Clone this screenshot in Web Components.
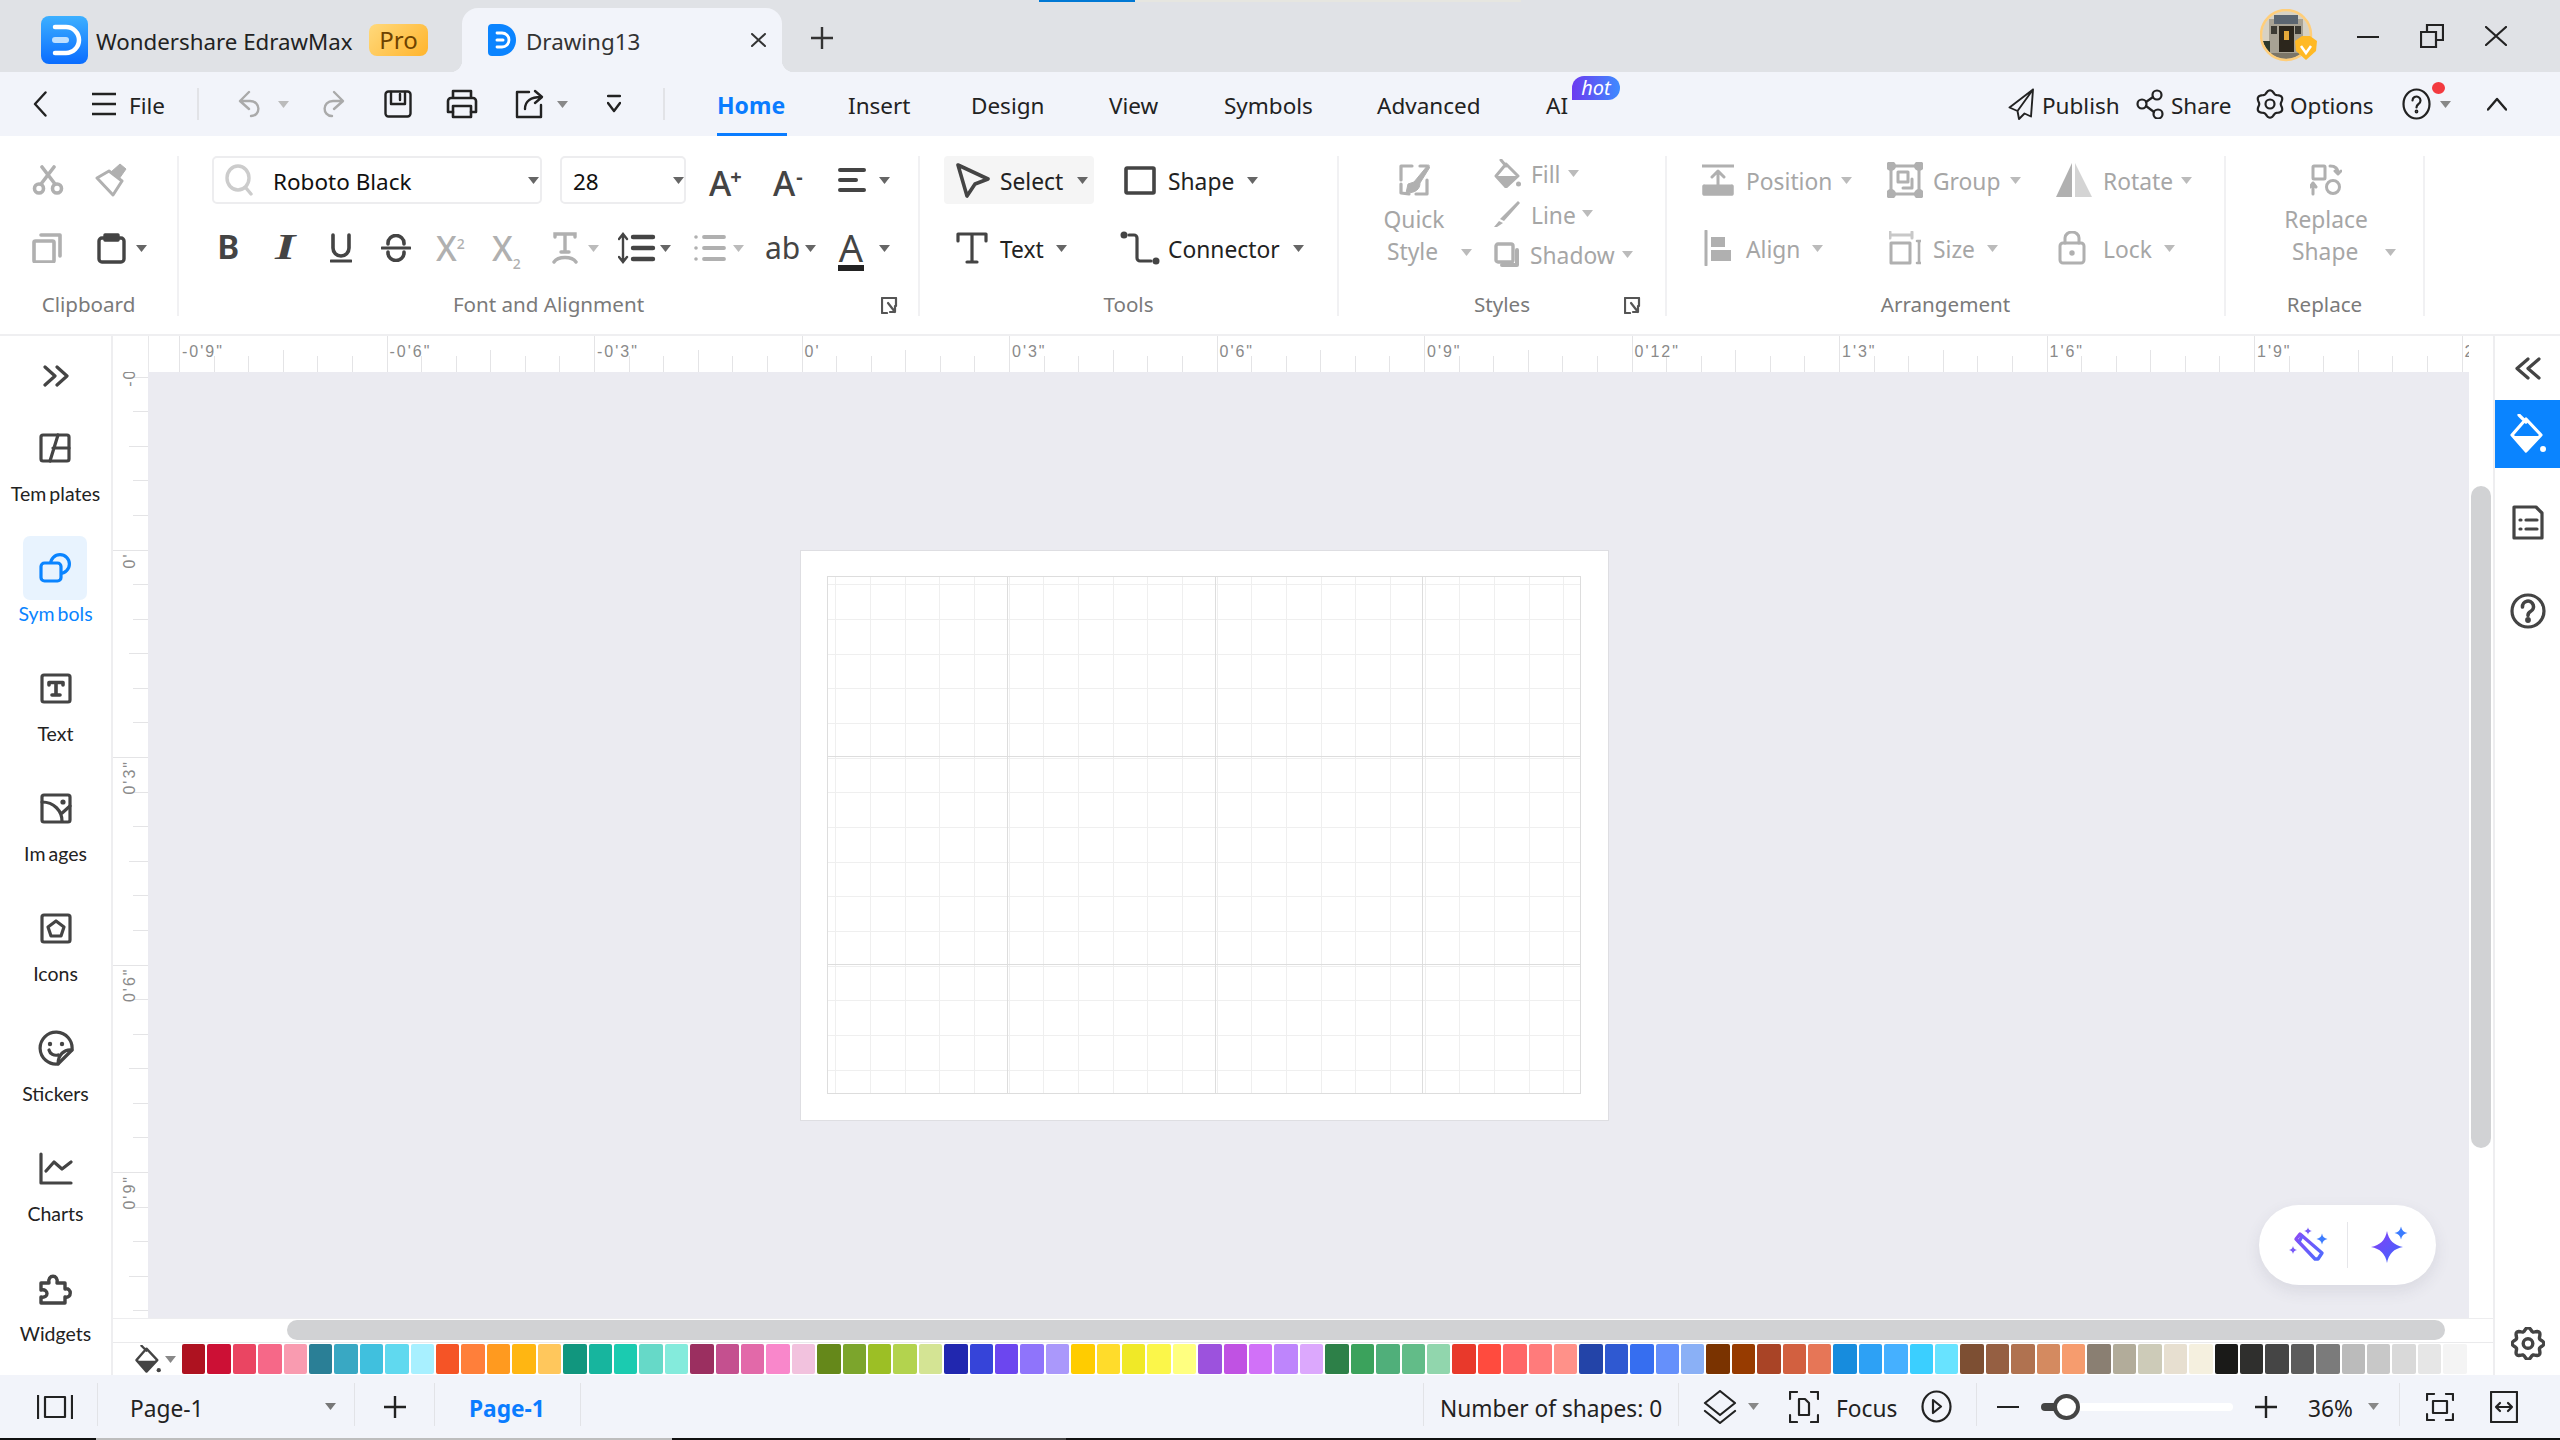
<!DOCTYPE html>
<html lang="en"><head><meta charset="utf-8"><title>EdrawMax</title>
<style>html,body{margin:0;padding:0;width:2560px;height:1440px;overflow:hidden;background:#fff;font-family:"Noto Sans",sans-serif}</style>
</head><body><app-shell></app-shell>
<script>
function gear(cx,cy,R,amp,n,rot){let d='';for(let i=0;i<96;i++){const t=i/96*Math.PI*2;const r=R*(1+amp*Math.cos(n*t+(rot||0)));d+=(i?'L':'M')+(cx+r*Math.sin(t)).toFixed(2)+' '+(cy-r*Math.cos(t)).toFixed(2)}return d+'Z'}
const star=(x,y,r)=>`M${x} ${y-r}Q${x+r*.15} ${y-r*.15} ${x+r} ${y}Q${x+r*.15} ${y+r*.15} ${x} ${y+r}Q${x-r*.15} ${y+r*.15} ${x-r} ${y}Q${x-r*.15} ${y-r*.15} ${x} ${y-r}Z`;
const ICONS={
back:[14,26,2.4,'<path d="M12.5 1.5 2 13l10.5 11.5"/>'],
ham:[24,24,2.4,'<path d="M0 2h24M0 12h24M0 22h24"/>'],
undo:[24,28,2.4,'<path d="M11 2 2 11l9 8M3 11h9c11 0 11 15 1 15"/>'],
redo:[24,28,2.4,'<path d="M13 2l9 9-9 8M21 11h-9C1 11 1 26 11 26"/>'],
save:[28,28,2.4,'<rect x="1.5" y="1.5" width="25" height="25" rx="3"/><path d="M7 2v12h14V2M16 4v6"/>'],
print:[32,30,2.6,'<path d="M7 9V2h18v7M7 23H2V12a3 3 0 0 1 3-3h22a3 3 0 0 1 3 3v11h-5"/><rect x="7" y="17" width="18" height="11"/>'],
exp:[31,30,2.4,'<path d="M14 3H2v25h24V16M10 20c0-8 6-12 16-12M20 2l7 6-7 6"/>'],
qa:[14,20,2.4,'<path d="M1 2h12M1 9l6 8 6-8"/>'],
pub:[27,32,1.9,'<path d="M25 1.500 1.500 19.500l8 3.500 1.500 8 5.500-5.500 6.500 3zM25 1.500 9.500 23"/>'],
share:[28,30,2.2,'<circle cx="6" cy="15" r="4.500"/><circle cx="21" cy="6" r="4.500"/><circle cx="22" cy="25" r="4.500"/><path d="m10 13 7-5M10 17l8 6"/>'],
gear:[28,30,2.2,`<path d="${gear(14,15,12.2,.12,6,0)}"/><circle cx="14" cy="15" r="4.500"/>`],
help:[29,32,2.2,'<ellipse cx="14.500" cy="16" rx="13" ry="14.500"/><path d="M10.500 12.500a4 4 0 1 1 6 3.500c-1.500 1-2 1.500-2 3.500"/><circle cx="14.500" cy="23.500" r=".8"/>'],
up:[20,14,2.4,'<path d="M1 12.500 10 2l9 10.500"/>'],
cut:[32,30,3.6,'<circle cx="7" cy="23.500" r="4.500"/><circle cx="25" cy="23.500" r="4.500"/><path d="M9 19 22 2M23 19 10 2"/>'],
brush:[34,34,3,'<path d="M3 15 15 8l13 10-9 14z"/><path fill="currentColor" stroke-width="1" d="M17 9 26 1l6 5-7 10z"/>'],
copy:[30,30,3.6,'<rect x="2" y="8" width="20" height="21" rx="1.500"/><path d="M9 2h19v21"/>'],
paste:[29,32,3.4,'<rect x="2" y="6" width="25" height="24" rx="3"/><path fill="currentColor" d="M8 8V3h13v5z"/>'],
search:[28,32,3.4,'<ellipse cx="13" cy="14" rx="11" ry="12"/><path d="m21 24 5 6"/>'],
uline:[22,30,3.6,'<path d="M3 2v13a8 8 0 0 0 16 0V2"/><path d="M1 28h20" stroke-width="3"/>'],
strike:[30,28,3.6,'<path d="M7 10V9a8 7.500 0 0 1 16 0v1M7 18v1a8 7.500 0 0 0 16 0v-1"/><path d="M1 14h28" stroke-width="3"/>'],
select:[36,36,3.6,'<path d="M3 3l30 14-13 5-8 12z"/>'],
shape:[32,29,3.6,'<rect x="2" y="2" width="28" height="25" rx="1"/>'],
textT:[32,32,3.2,'<path d="M2 9V2h28v7M16 2v28M11 30h10"/>'],
conn:[40,34,3.2,'<path d="M9 4h5a3 3 0 0 1 3 3v20a3 3 0 0 0 3 3h11"/><circle cx="4" cy="4" r="3.500" fill="currentColor" stroke="none"/><circle cx="36" cy="30" r="3.500" fill="currentColor" stroke="none"/>'],
quick:[32,32,3.200,'<path d="M14 2H3v14M18 30h11V16M3 20v9l8 1"/><path fill="currentColor" stroke-width="1" d="M30 1 16 18l-6 2-2 9c10 0 14-4 14-10L32 3z"/><path d="M22 2h7"/>'],
fill:[27,29,3,'<path d="M7 1l5 6M12 5 24 17 12 28 2 17z"/><path fill="currentColor" stroke="none" d="M3 17h21L12 29z"/><circle cx="24.500" cy="25" r="2.500" fill="currentColor" stroke="none"/>'],
line:[26,26,2,'<path fill="currentColor" stroke="none" d="M24 0l2 2L10 20 6 18zM5 20l4 2-6 4-3 0z"/>'],
shadow:[26,25,3.400,'<rect x="2" y="2" width="17" height="18" rx="2"/><path stroke-width="4" d="M23 8v15H8"/>'],
position:[32,32,3,'<path d="M0 2h32M16 22V8M10 13l6-6 6 6"/><path d="M2 22h28v8H2z" fill="currentColor" stroke-linejoin="round"/><path d="M2 22v8h28v-8"/>'],
group:[36,36,3,'<rect x="4" y="4" width="28" height="28" rx="1"/><circle cx="4" cy="4" r="3.500" fill="currentColor"/><circle cx="32" cy="4" r="3.500" fill="currentColor"/><circle cx="4" cy="32" r="3.500" fill="currentColor"/><circle cx="32" cy="32" r="3.500" fill="currentColor"/><rect x="11" y="10" width="10" height="10"/><path d="M25 17v9H16"/>'],
rotate:[36,34,0,'<path fill="currentColor" d="M16 0v34H0z"/><path fill="currentColor" opacity=".55" d="M19 0l17 34H19z"/>'],
align:[28,36,3,'<path d="M2 1v34"/><rect x="7" y="7" width="14" height="10" fill="currentColor" stroke="none"/><rect x="7" y="20" width="20" height="11" fill="currentColor" stroke="none"/>'],
size:[32,34,3,'<path d="M1 1v6M23 1v6M1 4h22" opacity=".7"/><rect x="2" y="12" width="19" height="20"/><path d="M28 10h4M30 10v22M28 32h4" stroke-width="2.600"/>'],
lock:[28,34,3,'<rect x="2" y="12" width="24" height="20" rx="3"/><path d="M7 12V7a7 6 0 0 1 14 0v5"/><circle cx="14" cy="22" r="1.200" fill="currentColor"/>'],
replace:[32,32,3,'<rect x="3" y="2" width="12" height="13" rx="1"/><circle cx="23" cy="23" r="6.500"/><path d="M20 2c5 0 8 2 8 7M25 7l3 3 3-3M3 19v11M0 23l3-4 3 4"/>'],
launch:[17,17,2.200,'<path d="M6 1H1v15h5M1 1h14v8"/><path d="M7 6l7 9M14 9v6H9"/>'],
chevR:[26,22,3.200,'<path d="M2 2l10 9-10 9M14 2l10 9-10 9"/>'],
chevL:[26,23,3.200,'<path d="M24 2 13 11.500l11 9.500M13 2 2 11.500 13 21"/>'],
tmpl:[32,30,3.200,'<rect x="2" y="2" width="28" height="26" rx="2"/><path d="M14 15h16M19 2l-8 26"/>'],
sym:[32,30,3.200,'<circle cx="21" cy="11" r="9.400"/><rect x="2" y="10" width="20" height="18" rx="3.500" fill="#E8F3FE"/>'],
tbox:[32,31,3.200,'<rect x="2" y="2" width="28" height="27" rx="2"/><path stroke-width="3.600" d="M9 12V9.500h14V12M16 9.500V22M12 22h8"/>'],
imgs:[32,31,3.200,'<rect x="2" y="2" width="28" height="27" rx="2"/><path d="M2 9c12 0 20 9 20 19M21 21l9-8"/><circle cx="23" cy="9" r="2.600" fill="currentColor" stroke="none"/>'],
icn:[32,31,3.200,'<rect x="2" y="2" width="28" height="27" rx="2"/><path d="M16 8l8 6-3 9H11l-3-9z"/>'],
stick:[36,36,3.200,'<path d="M34 20A16 16 0 1 0 20 34z"/><path d="M34 20c-8-1-14 5-14 14M11 20c1 4 5 6 9 5"/><circle cx="12" cy="14" r="2.200" fill="currentColor" stroke="none"/><circle cx="24" cy="14" r="2.200" fill="currentColor" stroke="none"/>'],
chart:[34,33,3.200,'<path d="M2 2v29h30M7 19l8-9 8 7 9-7"/>'],
widg:[33,33,3.400,'<path d="M2 11h8C8 2 20 2 18 11h8v6c7-2 7 10 0 8v6H2v-6c8 2 8-9 0-7z"/>'],
bucket:[36,40,3.200,'<path d="M9 1l7 7M16 5 31 21 16 37 2 21z"/><path fill="currentColor" stroke="none" d="M3 22h27L16 37z"/><circle cx="33" cy="35" r="3" fill="currentColor" stroke="none"/>'],
doc:[32,35,3.200,'<path d="M2 2h22l6 6v25H2z"/><path d="M8 15h1M8 24h1M14 15h11M14 24h11"/>'],
helpR:[36,36,3.200,'<circle cx="18" cy="18" r="16"/><path stroke-width="3.600" d="M12.500 14a5.500 5.500 0 1 1 8 4.500c-2 1-2.500 2-2.500 4"/><circle cx="18" cy="27" r="1.300" fill="currentColor"/>'],
gearR:[34,33,3.400,`<path d="${gear(17,16.500,14.200,.12,8,0)}"/><circle cx="17" cy="16.500" r="4.800"/>`],
pane:[36,24,2.200,'<path d="M1 0v24M35 0v24"/><rect x="8" y="2" width="20" height="20"/>'],
plus:[22,22,2.400,'<path d="M11 0v22M0 11h22"/>'],
layers:[34,34,2.200,'<path d="M17 1 32 13 17 25 2 13z"/><path d="M2 21l15 12 15-12"/>'],
focus:[30,32,2.200,'<path d="M1 8V1h7M22 1h7v7M1 24v7h7M22 31h7v-7M10 8h6l4 4v12H10z"/>'],
play:[31,33,2.200,'<ellipse cx="15.500" cy="16.500" rx="14" ry="15"/><path d="M12 10l8 6.500-8 6.500z"/>'],
minus:[22,2,2.400,'<path d="M0 1h22"/>'],
fit:[28,28,2.200,'<path d="M1 7V1h7M20 1h7v6M1 21v6h7M20 27h7v-6"/><rect x="7" y="8" width="14" height="12"/>'],
wid:[28,32,2.200,'<rect x="1" y="1" width="26" height="30"/><path d="M6 16h16M10 12l-4 4 4 4M18 12l4 4-4 4"/>'],
wand:[40,37,0,'<defs><linearGradient id="g1" x1="0" y1="0" x2="1" y2="1"><stop offset="0" stop-color="#8a4bf5"/><stop offset="1" stop-color="#4f6bff"/></linearGradient></defs><g fill="none" stroke="url(#g1)" stroke-width="3.400" stroke-linejoin="round"><path d="M7 12l4-5 22 19-4 6h-3z"/><path d="M13 9l-3 6"/></g><path fill="#7a5cf8" d="'+star(4,23,4)+star(19,4,3.800)+'"/><path fill="#3c7cff" d="'+star(33,12,5.500)+'"/>'],
spark:[38,38,0,'<defs><linearGradient id="g2" x1="0" y1="0" x2="1" y2="1"><stop offset="0" stop-color="#8a3df5"/><stop offset="1" stop-color="#3a68ff"/></linearGradient></defs><path fill="url(#g2)" d="'+star(16,21,16)+'"/><path fill="#3c7cff" d="'+star(30,7,6.500)+'"/>']
};
function ic(n,k=1,extra=''){const i=ICONS[n];return `<svg width="${i[0]*k}" height="${i[1]*k}" viewBox="0 0 ${i[0]} ${i[1]}" fill="none" stroke="currentColor" stroke-width="${i[2]}" stroke-linecap="round" stroke-linejoin="round" style="display:block;flex:none;${extra}">${i[3]}</svg>`}
const caret=(c='#777')=>`<svg width="11" height="7" viewBox="0 0 11 7" style="display:block;flex:none"><path d="M0 0h11L5.500 7z" fill="${c}"/></svg>`;
/* place children in flow by giving each cell the width up to the next one */
function cells(origin,end,items){let h='',p=origin;items.forEach((it,i)=>{const x=it[0],n=i+1<items.length?items[i+1][0]:end;if(x>p)h+=`<span class="c" style="width:${x-p}px"></span>`;h+=`<span class="c" style="width:${n-x}px">${it[1]}</span>`;p=n});return h}
const CELL=`.c{display:flex;align-items:center;flex:none;white-space:nowrap;height:100%}`;
class Base extends HTMLElement{connectedCallback(){if(this.shadowRoot)return;this.attachShadow({mode:'open'}).innerHTML=this.render()}attr(n,d=''){return this.hasAttribute(n)?this.getAttribute(n):d}}
const def=(n,f)=>customElements.define(n,class extends Base{render(){return f.call(this)}});

def('rb-tool',function(){const dim=this.hasAttribute('dim');const col=dim?'#b0b0b0':'#444';const h=this.attr('h','48');
 const lab=this.attr('label');const lx=+this.attr('lx',0),cx=+this.attr('cx',0);
 return `<style>:host{display:flex;align-items:center;box-sizing:border-box;height:${h}px;color:${col};font-size:22.800px;flex:none}
 .i{display:flex;align-items:center;width:${lx||'auto'}${lx?'px':''};flex:none}.l{color:${dim?'#a6a6a6':'#222'};width:${cx&&lx?cx-lx+'px':'auto'};flex:none;white-space:nowrap;line-height:32px;position:relative;top:2px}</style>
 <span class="i">${this.attr('icon')?ic(this.attr('icon')):''}<slot></slot></span>${lab?`<span class="l">${lab}</span>`:''}${this.hasAttribute('caret')?caret(dim?'#bbb':'#666'):''}`});

def('rb-group',function(){return `<style>:host{display:block;flex:none;box-sizing:border-box;width:${this.attr('w')}px;height:160px;margin-top:20px;border-right:2px solid #F1F1F3;position:relative}
 .b{height:134px}.t{height:28px;line-height:28px;text-align:center;font-size:20.600px;color:#7a7a7a;white-space:nowrap;position:relative}
 .lc{position:absolute;color:#555;top:7px;right:${this.attr('lr','0')}px}</style>
 <div class="b"><slot></slot></div><div class="t">${this.attr('label')}${this.hasAttribute('lr')?`<span class="lc">${ic('launch')}</span>`:''}</div>`});

def('title-bar',function(){return `<style>:host{display:flex;box-sizing:border-box;height:72px;padding:8px 0 0 41px;background:#E0E2E6;align-items:center;position:relative;color:#222}
 .logo{margin-right:7px}.n{font-size:22.300px;width:273px;white-space:nowrap;position:relative;top:1px}
 .pro{width:59px;height:32px;border-radius:8px;background:linear-gradient(135deg,#FFD97C,#FFB42C);color:#6E4300;font-size:24px;text-align:center;line-height:32px;margin-right:34px}
 .tab{align-self:stretch;width:320px;background:#F2F4FA;border-radius:16px 16px 0 0;display:flex;align-items:center;padding-left:26px;box-sizing:border-box;position:relative;flex:none}
 .tab::before,.tab::after{content:"";position:absolute;bottom:0;width:12px;height:12px}
 .tab::before{left:-12px;background:radial-gradient(circle at 0 0,transparent 12px,#F2F4FA 12.500px)}
 .tab::after{right:-12px;background:radial-gradient(circle at 100% 0,transparent 12px,#F2F4FA 12.500px)}
 .tn{margin-left:10px;font-size:22.400px;width:225px;position:relative;top:1px;color:#333}
 .plus{margin-left:29px;color:#333;margin-top:-5px}
 .sp{flex:1}.right{display:flex;align-items:center;margin-top:-8px;height:72px}
 .prog{position:absolute;left:1039px;top:0;height:2px;width:482px;background:linear-gradient(90deg,#0078D4 96px,#E6E6E0 96px)}
 .x{color:#222}</style>
 <span class="prog"></span>
 <svg class="logo" width="48" height="48" viewBox="0 0 48 48"><defs><linearGradient id="lg" x1="0" y1="0" x2="0" y2="1"><stop offset="0" stop-color="#3DB0FF"/><stop offset="1" stop-color="#0A6CFF"/></linearGradient></defs><rect width="47" height="48" rx="8" fill="url(#lg)"/><path d="M14 11h11a13 13 0 0 1 0 26H14" fill="none" stroke="#fff" stroke-width="4.500" stroke-linecap="round"/><path d="M14 24h11" stroke="#BFE0FF" stroke-width="6" stroke-linecap="round"/></svg>
 <span class="n">Wondershare EdrawMax</span><span class="pro">Pro</span>
 <span class="tab"><svg width="28" height="32" viewBox="0 0 28 32"><path d="M0 4a4 4 0 0 1 4-4h8c9 0 16 7 16 16s-7 16-16 16H4a4 4 0 0 1-4-4z" fill="#0B84FF"/><path d="M9 9h5a7 7 0 0 1 0 14H9" fill="none" stroke="#fff" stroke-width="2.800" stroke-linecap="round"/><path d="M9 16h6" stroke="#fff" stroke-width="3" stroke-linecap="round"/></svg><span class="tn">Drawing13</span>
 <svg width="15" height="14" viewBox="0 0 15 14"><path d="M1 1l13 12M14 1 1 13" stroke="#333" stroke-width="2" stroke-linecap="round"/></svg></span>
 <span class="plus">${ic('plus')}</span><span class="sp"></span>
 <span class="right">
 <svg width="60" height="54" viewBox="0 0 60 54" style="margin-right:37px"><defs><clipPath id="av"><ellipse cx="26" cy="26" rx="24" ry="24"/></clipPath></defs><g clip-path="url(#av)"><rect width="52" height="52" fill="#D8D2C4"/><rect x="9" y="10" width="34" height="44" fill="#A8A294"/><rect x="14" y="6" width="24" height="9" fill="#5B6570"/><rect x="11" y="17" width="6" height="8" fill="#3c3a33"/><rect x="35" y="17" width="6" height="8" fill="#3c3a33"/><rect x="19" y="17" width="15" height="26" fill="#2C261C"/><rect x="24" y="22" width="5" height="9" fill="#E5A93A"/><rect x="2" y="32" width="8" height="22" fill="#2C3A2E"/><rect x="6" y="44" width="38" height="8" fill="#7C7668"/></g><ellipse cx="26" cy="26" rx="25" ry="25" fill="none" stroke="#FFCE7A" stroke-width="2.500"/><path d="M36 43l-1-10 7-5h8l7 5-1 10-10 9z" fill="#FFB925" transform="translate(0 -1)"/><path d="M41 37l5 7 5-7" fill="none" stroke="#fff" stroke-width="2.500"/></svg>
 <span style="width:22px;height:2.500px;background:#222;margin-right:41px;margin-top:2px"></span>
 <svg width="24" height="24" viewBox="0 0 24 24" style="margin-right:41px;margin-top:-1px"><path d="M1 8h15v15H1zM7 8V1h16v15h-7" fill="none" stroke="#222" stroke-width="2.200"/></svg>
 <svg class="x" width="22" height="20" viewBox="0 0 22 20" style="margin-right:53px"><path d="M1 1l20 18M21 1 1 19" stroke="#222" stroke-width="2.200" stroke-linecap="round"/></svg>
 </span>`});

def('menu-bar',function(){const t=s=>`<span style="position:relative;top:1px">${s}</span>`;
 return `<style>:host{display:flex;height:64px;background:#F2F4FA;font-size:22.500px;color:#222;position:relative}${CELL}
 .d{width:2px;height:32px;background:#E2E3E7}.g{color:#aaa}.home{color:#0A7CFF;font-weight:700;position:relative;top:1px;font-size:23px}
 .u{position:absolute;left:717px;top:61px;width:70px;height:3px;background:#0A7CFF}
 .hot{position:absolute;left:1572px;top:4px;width:48px;height:24px;border-radius:12px 12px 12px 0;background:linear-gradient(90deg,#6C3BF0,#3E8BFF);color:#fff;font-style:italic;font-size:20px;line-height:23px;text-align:center}
 .dot{position:absolute;left:2432px;top:10px;width:13px;height:12px;border-radius:50%;background:#F33A3F}</style>`+
 cells(0,2560,[[33,ic('back')],[92,ic('ham')],[129,t('File')],[197,'<span class="d"></span>'],[238,`<span class="g">${ic('undo')}</span>`],[278,caret('#bbb')],[321,`<span class="g">${ic('redo')}</span>`],[384,ic('save')],[446,ic('print')],[515,ic('exp')],[557,caret('#888')],[607,ic('qa')],[663,'<span class="d"></span>'],[717,'<span class="home">Home</span>'],[848,t('Insert')],[971,t('Design')],[1109,t('View')],[1224,t('Symbols')],[1377,t('Advanced')],[1546,t('AI')],[2008,ic('pub')],[2042,t('Publish')],[2136,ic('share')],[2171,t('Share')],[2256,ic('gear')],[2290,t('Options')],[2402,ic('help')],[2440,caret('#888')],[2487,ic('up')]])+
 `<span class="u"></span><span class="hot">hot</span><span class="dot"></span>`});

def('font-box',function(){return `<style>:host{display:flex;align-items:center;box-sizing:border-box;height:48px;width:${this.attr('w')}px;border:2px solid #EDEDEF;border-radius:5px;font-size:22.500px;color:#111;padding-left:${this.attr('pl')}px;position:relative}
 span{width:${this.attr('tw')}px;white-space:nowrap;position:relative;top:1px}.s{color:#ccc;margin-right:20px}</style>
 ${this.hasAttribute('search')?`<i class="s" style="font-style:normal">${ic('search')}</i>`:''}<span>${this.attr('label')}</span>${caret('#666')}`});

def('app-ribbon',function(){
 const T=(x,a)=>[x,`<rb-tool ${a}></rb-tool>`];
 const G=(s,st='')=>`<span style="font-size:32px;line-height:48px;color:#444;display:block;${st}">${s}</span>`;
 return `<style>:host{display:flex;height:200px;background:#fff;box-sizing:border-box;border-bottom:2px solid #EFEFF1;color:#222}${CELL}
 .r{display:flex;height:48px;align-items:center}.r+.r{margin-top:20px}
 .col{display:flex;flex-direction:column;align-items:center;font-size:22.800px;color:#a6a6a6;line-height:32px;flex:none;margin-top:8px}
 sup,sub{font-size:14px;line-height:0}.ic{color:#444}</style>
 <rb-group w="179" label="Clipboard"><div class="r">${cells(0,179,[T(32,'icon="cut" dim'),T(94,'icon="brush" dim')])}</div><div class="r">${cells(0,179,[T(32,'icon="copy" dim'),T(97,'icon="paste" lx="39" caret')])}</div></rb-group>
 <rb-group w="741" label="Font and Alignment" lr="20"><div class="r">${cells(179,920,[[212,'<font-box w="330" pl="11" tw="255" label="Roboto Black" search></font-box>'],[560,'<font-box w="126" pl="11" tw="100" label="28"></font-box>'],[709,G('A<span style="font-size:20px;font-weight:700;vertical-align:12px;margin-left:-1px">+</span>','font-weight:500;font-size:34px')],[773,G('A<span style="font-size:20px;font-weight:700;vertical-align:12px;margin-left:1px">-</span>','font-weight:500;font-size:34px')],[838,'<rb-tool lx="41" caret><svg width="32" height="28" viewBox="0 0 32 28"><path d="M2 4h24M2 14h16M2 24h24" stroke="#444" stroke-width="4" stroke-linecap="round"/></svg></rb-tool>']])}</div>
 <div class="r">${cells(179,920,[[218,G('B','font-weight:700;font-size:33px;font-family:Roboto,sans-serif')],[275,G('I','font-family:&quot;Liberation Serif&quot;,serif;font-weight:700;font-style:italic;font-size:35px;transform:scaleX(1.5);transform-origin:left center')],[330,`<span class="ic">${ic('uline')}</span>`],[381,`<span class="ic">${ic('strike')}</span>`],[436,G('X<sup>2</sup>','color:#b0b0b0;font-size:34px;font-weight:500')],[492,G('X<sub>2</sub>','color:#b0b0b0;font-size:34px;font-weight:500')],[552,'<rb-tool dim lx="36" caret><svg width="26" height="32" viewBox="0 0 26 32" fill="none" stroke="#b0b0b0" stroke-width="3.400" stroke-linecap="round"><path d="M3 5V2h20v3M13 2v18M9 20h8M2 30c4-6 18-6 22 0"/></svg></rb-tool>'],[618,'<rb-tool lx="42" caret><svg width="38" height="32" viewBox="0 0 38 32" fill="none" stroke="#444" stroke-linecap="round"><path stroke-width="2.400" d="M5 3v26M1 7l4-5 4 5M1 25l4 5 4-5"/><path stroke-width="4.400" d="M15 5h20M15 16h20M15 27h20"/></svg></rb-tool>'],[694,'<rb-tool dim lx="39" caret><svg width="32" height="30" viewBox="0 0 32 30" fill="none" stroke="#b0b0b0" stroke-linecap="round"><path stroke-width="3.600" d="M2 4h0M2 15h0M2 26h0"/><path stroke-width="3.800" d="M10 4h20M10 15h20M10 26h20"/></svg></rb-tool>'],[765,'<rb-tool lx="40" caret><span style="font-size:30px;line-height:48px;color:#444">ab</span></rb-tool>'],[838,'<rb-tool lx="41" caret><span style="font-size:38px;line-height:36px;color:#444;border-bottom:6px solid #222;display:block;margin-bottom:-3px;width:26px;text-align:center">A</span></rb-tool>']])}</div></rb-group>
 <rb-group w="419" label="Tools"><div class="r">${cells(920,1338,[[944,'<rb-tool icon="select" lx="45" cx="122" label="Select" caret style="background:#F5F5F5;border-radius:4px;padding-left:11px;width:150px"></rb-tool>'],T(1124,'icon="shape" lx="44" cx="123" label="Shape" caret')])}</div>
 <div class="r">${cells(920,1338,[T(956,'icon="textT" lx="44" cx="100" label="Text" caret'),T(1120,'icon="conn" lx="48" cx="173" label="Connector" caret')])}</div></rb-group>
 <rb-group w="328" label="Styles" lr="24"><div style="display:flex"><div class="col" style="margin-left:30px;width:90px">${ic('quick',1,'color:#b0b0b0;margin-bottom:8px')}<span>Quick</span><span style="display:flex;align-self:flex-start;margin-left:18px;align-items:center">Style<span style="margin-left:23px">${caret('#bbb')}</span></span></div>
 <div style="margin-left:35px;margin-top:-3px"><rb-tool dim h="40" icon="fill" lx="37" cx="74" label="Fill" caret></rb-tool><rb-tool dim h="41" icon="line" lx="37" cx="88" label="Line" caret></rb-tool><rb-tool dim h="40" icon="shadow" lx="36" cx="128" label="Shadow" caret></rb-tool></div></div></rb-group>
 <rb-group w="559" label="Arrangement"><div class="r">${cells(1667,2225,[T(1702,'dim icon="position" lx="44" cx="139" label="Position" caret'),T(1887,'dim icon="group" lx="46" cx="123" label="Group" caret'),T(2056,'dim icon="rotate" lx="47" cx="125" label="Rotate" caret')])}</div>
 <div class="r">${cells(1667,2225,[T(1704,'dim icon="align" lx="42" cx="108" label="Align" caret'),T(1889,'dim icon="size" lx="44" cx="98" label="Size" caret'),T(2058,'dim icon="lock" lx="45" cx="106" label="Lock" caret')])}</div></rb-group>
 <rb-group w="199" label="Replace"><div style="display:flex"><div class="col" style="margin-left:50px;width:100px">${ic('replace',1,'color:#b0b0b0;margin-bottom:8px')}<span>Replace</span><span style="display:flex;align-self:flex-start;margin-left:16px;align-items:center">Shape<span style="margin-left:27px">${caret('#bbb')}</span></span></div></div></rb-group>`});

def('rail-item',function(){const a=this.hasAttribute('active');
 return `<style>:host{display:flex;flex-direction:column;align-items:center;height:92px;color:${a?'#0A84FF':'#444'};flex:none;font-family:Lato,sans-serif}
 .b{width:64px;height:64px;display:flex;align-items:center;justify-content:center;border-radius:7px;background:${a?'#E8F3FE':'none'}}
 .l{font-size:19.500px;line-height:28px;color:${a?'#0A84FF':'#222'};white-space:nowrap}</style>
 <span class="b">${ic(this.attr('icon'))}</span><span class="l"><slot></slot></span>`});

def('left-rail',function(){const m='<span style="margin-left:3px"></span>';
 return `<style>:host{display:flex;flex-direction:column;align-items:center;width:113px;box-sizing:border-box;border-right:2px solid #EEEEF0;flex:none;background:#fff;gap:28px;color:#444}
 .top{height:52px;display:flex;align-items:center;color:#444;margin-top:14px;margin-bottom:-14px;height:52px}</style>
 <span class="top">${ic('chevR')}</span>
 <rail-item icon="tmpl">Tem${m}plates</rail-item><rail-item icon="sym" active>Sym${m}bols</rail-item><rail-item icon="tbox">Text</rail-item><rail-item icon="imgs">Im${m}ages</rail-item><rail-item icon="icn">Icons</rail-item><rail-item icon="stick">Stickers</rail-item><rail-item icon="chart">Charts</rail-item><rail-item icon="widg">Widgets</rail-item>`});

def('right-rail',function(){return `<style>:host{display:flex;flex-direction:column;align-items:center;width:67px;box-sizing:border-box;border-left:2px solid #EEEEF0;flex:none;background:#fff;color:#444}
 .a{height:64px;display:flex;align-items:center;margin-top:0}.on{align-self:stretch;height:68px;background:#0A84FF;color:#fff;display:flex;align-items:center;justify-content:center}
 .d{height:88px;display:flex;align-items:center}.sp{flex:1}.g{height:48px;display:flex;align-items:flex-start;margin-bottom:0}</style>
 <span class="a">${ic('chevL')}</span><span class="on">${ic('bucket')}</span><span class="d" style="margin-top:10px">${ic('doc')}</span><span class="d" style="margin-top:1px">${ic('helpR')}</span><span class="sp"></span><span class="g">${ic('gearR')}</span>`});

const RT='font-family="Liberation Sans,sans-serif" font-size="16" letter-spacing="2" fill="#8a8a8a"';
def('h-ruler',function(){const P=207.5,W=2321,O=148;let s='';const labs=['-0\'9"','-0\'6"','-0\'3"','0\'','0\'3"','0\'6"','0\'9"','0\'12"','1\'3"','1\'6"','1\'9"','2\''];
 labs.forEach((l,k)=>{const x=178+P*k-O;s+=`<path d="M${x.toFixed(0)}.5 0V36" stroke="#E4E4E6"/>`;for(let j=1;j<6;j++){const xx=(x+P/6*j).toFixed(0);s+=`<path d="M${xx}.5 ${j==3?14:20}V36" stroke="#E4E4E6"/>`}
 s+=`<text x="${x+3}" y="21" ${RT}>${l.replace(/"/g,'&quot;')}</text>`});
 return `<style>:host{display:flex;height:36px;flex:none;background:#fff}.corner{width:35px;flex:none;border-right:1px solid #E8E8EA}svg{display:block}.r{width:24px;flex:none}</style>
 <span class="corner"></span><svg width="${W}" height="36">${s}</svg><span class="r"></span>`});

def('v-ruler',function(){const P=207.5;let s='';const labs=['-0\'3"','0\'','0\'3"','0\'6"','0\'9"'];
 labs.forEach((l,k)=>{const y=342-372+P*k;s+=`<path d="M0 ${y.toFixed(0)}.5H35" stroke="#E4E4E6"/>`;for(let j=1;j<6;j++){const yy=(y+P/6*j).toFixed(0);s+=`<path d="M${j==3?16:20} ${yy}.5H35" stroke="#E4E4E6"/>`}
 s+=`<text transform="translate(22 ${y+3}) rotate(-90)" text-anchor="end" ${RT}>${l.replace(/"/g,'&quot;')}</text>`});
 return `<style>:host{display:block;width:35px;flex:none;background:#fff;overflow:hidden}svg{display:block}</style><svg width="35" height="946">${s}</svg>`});

def('draw-page',function(){const W=752,H=516;let s='';
 for(let x=7.3;x<W;x+=34.667){s+=`<path d="M${Math.round(x)}.5 0V${H}" stroke="#EFEFEF"/>`}
 for(let y=7.3;y<H;y+=34.667){s+=`<path d="M0 ${Math.round(y)}.5H${W}" stroke="#EFEFEF"/>`}
 [179,387,594].forEach(x=>s+=`<path d="M${x}.5 0V${H}" stroke="#DDD"/>`);[179,387].forEach(y=>s+=`<path d="M0 ${y}.5H${W}" stroke="#DDD"/>`);
 return `<style>:host{display:block;box-sizing:border-box;width:809px;height:571px;background:#fff;border:1px solid #DEDEE2;padding:25px 0 0 26px;flex:none}svg{display:block;border:1px solid #DDD}</style><svg width="${W}" height="${H}">${s}</svg>`});

def('ai-pill',function(){return `<style>:host{position:absolute;right:33px;bottom:33px;width:177px;height:80px;background:#fff;border-radius:40px;box-shadow:0 6px 16px rgba(60,60,90,.10);display:flex;align-items:center;box-sizing:border-box;padding-left:30px}
 i{width:1px;height:46px;background:#E6E6EA;margin:0 23px 0 18px}</style>${ic('wand')}<i></i>${ic('spark')}`});

def('work-canvas',function(){return `<style>:host{display:block;flex:1;background:#EBEBF1;position:relative;padding:178px 0 0 652px;box-sizing:border-box;overflow:hidden}</style><draw-page></draw-page><ai-pill></ai-pill>`});

def('color-bar',function(){const C='AE1220 CC1035 EA4562 F66888 F99BB0 2A7F96 39A8C3 40C0DE 60D9EF A8F0FF F55426 FF7F3A FF9A1F FFB612 FFC75C 11967E 17B59E 1BCBB0 66D9C8 84EBDC 9B2F60 C4508F E269A9 F987CB F2C2DE 65881A 7CA52C 9CBF25 B3D34E D4E494 2127AF 3644D9 6C46EF 8F74FB AA98FB FFCC00 FFDC2B F0E927 FBF64A FFFF80 9C52DD C052E3 D171F8 BE85FC DCA8FD 2D8048 3BA25C 50AF7A 62BC88 91D6AD E8392B FF4B3E FF6666 FF7B7B FF9189 2344A8 2F59D1 366EF0 6590FB 8AB0F6 7A3300 973B00 A94426 D26040 E67657 178CDD 2DA1F5 45B0FF 3BCFFF 68E3FF 7D4F33 955F42 B07250 D48A60 F69C6E 8A7F72 B2AC9A CDCBB8 E7DFD0 F5F0DF 1A1A18 2F2F2D 454545 5C5C5C 7B7B7B BBBBBB C8C8C8 D9D9D9 E6E6E6 F4F4F4 FFFFFF'.split(' ');
 return `<style>:host{display:flex;height:33px;box-sizing:border-box;background:#fff;border-top:1px solid #EAEAEC;flex:none;padding-top:1px}
 .lead{display:flex;align-items:center;width:69px;flex:none;padding-left:22px;box-sizing:border-box;color:#444;gap:4px;height:31px}
 .s{display:flex;gap:2px}.s b{width:23.420px;height:30px;border-radius:2px;display:block}</style>
 <span class="lead">${ic('bucket',.72)}${caret('#888')}</span><span class="s">${C.map(c=>`<b style="background:#${c}"></b>`).join('')}</span>`});

def('status-bar',function(){const t=(s,st='')=>`<span style="position:relative;top:2px;${st}">${s}</span>`,d='<span class="d"></span>';
 return `<style>:host{display:flex;height:63px;background:#F2F4FA;font-size:22.700px;color:#222;flex:none}${CELL}
 .d{width:1px;height:43px;background:#E2E3E7;margin-top:-4px}
 .sl{display:flex;align-items:center;width:192px;height:8px;background:#fff;border-radius:4px;position:relative}
 .sl::before{content:"";width:26px;height:8px;border-radius:4px;background:#444}
 .k{width:19px;height:18px;border-radius:50%;border:4px solid #444;background:#fff;margin-left:-14px}</style>`+
 cells(0,2560,[[37,ic('pane')],[97,d],[130,t('Page-1')],[325,caret('#777')],[354,d],[384,ic('plus')],[434,d],[469,t('Page-1','color:#0A7CFF;font-weight:700')],[580,d],[1423,d],[1440,t('Number of shapes: 0')],[1678,d],[1703,ic('layers')],[1748,caret('#888')],[1789,ic('focus')],[1836,t('Focus')],[1921,ic('play')],[1976,d],[1997,ic('minus')],[2041,'<span class="sl"><span class="k"></span></span>'],[2255,ic('plus')],[2308,t('36%')],[2368,caret('#888')],[2399,d],[2426,ic('fit')],[2490,ic('wid')]])});

def('task-strip',function(){return `<style>:host{display:flex;height:2px;background:#111;flex:none}i{display:block;height:2px}</style><i style="width:96px"></i><i style="width:576px;background:#BDBDBD"></i><i style="width:298px"></i><i style="width:96px;background:#444"></i>`});

def('app-shell',function(){return `<style>:host{display:flex;flex-direction:column;width:2560px;height:1440px;overflow:hidden}
 .main{display:flex;height:1039px;flex:none}.mid{display:flex;flex-direction:column;flex:none;width:2380px}
 .w{display:flex;height:946px;flex:none}.vs{width:24px;flex:none;background:#fff;padding:114px 0 0 2px;box-sizing:border-box}.vs b{display:block;width:20px;height:662px;border-radius:10px;background:#D1D2D4}
 .hs{height:24px;background:#fff;box-sizing:border-box;border-top:1px solid #EDEDEF;padding:1px 0 0 174px;flex:none}.hs b{display:block;width:2158px;height:20px;border-radius:10px;background:#D1D2D4}</style>
 <title-bar></title-bar><menu-bar></menu-bar><app-ribbon></app-ribbon>
 <div class="main"><left-rail></left-rail><div class="mid"><h-ruler></h-ruler><div class="w"><v-ruler></v-ruler><work-canvas></work-canvas><span class="vs"><b></b></span></div><div class="hs"><b></b></div><color-bar></color-bar></div><right-rail></right-rail></div>
 <status-bar></status-bar><task-strip></task-strip>`});
</script></body></html>
